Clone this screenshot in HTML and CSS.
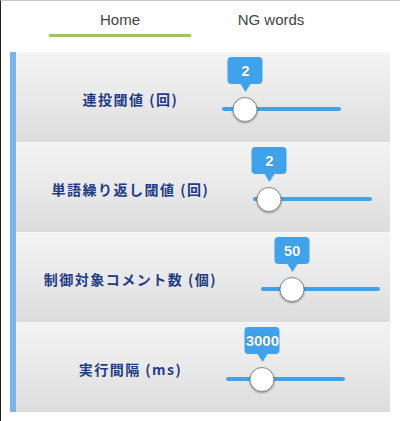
FILE: index.html
```html
<!DOCTYPE html>
<html>
<head>
<meta charset="utf-8">
<link rel="stylesheet" href="styles.css">
</head>
<body>
<div class="window">
  <nav class="tabs">
    <div class="tab active">Home</div>
    <div class="tab">NG words</div>
  </nav>
  <div class="panel">
    <div class="row">
      <div class="label">連投閾値 (回)</div>
      <div class="slider">
        <div class="track"></div>
        <div class="thumb" style="left:23px"></div>
        <div class="bubble" style="left:23px">2</div>
      </div>
    </div>
    <div class="row">
      <div class="label">単語繰り返し閾値 (回)</div>
      <div class="slider">
        <div class="track"></div>
        <div class="thumb" style="left:16px"></div>
        <div class="bubble" style="left:16px">2</div>
      </div>
    </div>
    <div class="row">
      <div class="label">制御対象コメント数 (個)</div>
      <div class="slider">
        <div class="track"></div>
        <div class="thumb" style="left:31px"></div>
        <div class="bubble" style="left:31px">50</div>
      </div>
    </div>
    <div class="row">
      <div class="label">実行間隔 (ms)</div>
      <div class="slider">
        <div class="track"></div>
        <div class="thumb" style="left:36px"></div>
        <div class="bubble" style="left:36px">3000</div>
      </div>
    </div>
  </div>
</div>
</body>
</html>
```
FILE: styles.css
```css
html, body {
  margin: 0;
  padding: 0;
  background: #ffffff;
}

.window {
  height: 420px;
  border-left: 1px solid #1c1c1c;
  border-top: 1px solid #c8c8c8;
  background: #ffffff;
  font-family: "Liberation Sans", Arial, sans-serif;
}

.tabs {
  display: flex;
  gap: 9px;
  padding-left: 48px;
}

.tab {
  width: 142px;
  box-sizing: border-box;
  padding-top: 9px;
  padding-bottom: 4px;
  line-height: 20px;
  border-bottom: 3px solid transparent;
  text-align: center;
  font-size: 15px;
  color: #444444;
}

.tab.active {
  border-bottom-color: #9cc55b;
}

.panel {
  margin-top: 15px;
  margin-left: 9px;
  width: 380px;
  box-sizing: border-box;
  border-left: 6px solid #7db2e8;
  background: #ffffff;
}

.row {
  height: 90px;
  box-sizing: border-box;
  border-top: 1px solid #f8f8f8;
  background: linear-gradient(to bottom, #f3f3f3 0%, #e9e9e9 50%, #dcdcdc 100%);
  display: flex;
  align-items: flex-start;
  justify-content: center;
  padding-left: 18px;
}

.label {
  margin-top: 36px;
  line-height: 20px;
  font-family: "Noto Sans CJK JP", "Liberation Sans", sans-serif;
  font-weight: 700;
  font-size: 14px;
  letter-spacing: 1.5px;
  color: #1f3c84;
  white-space: nowrap;
}

.slider {
  position: relative;
  width: 119px;
  margin-top: 4px;
  margin-left: 44px;
  padding-top: 50px;
  height: 20px;
}

.track {
  height: 4px;
  border-radius: 2px;
  background: #3fa2ea;
}

.thumb {
  position: absolute;
  top: 40px;
  width: 25px;
  height: 25px;
  box-sizing: border-box;
  border-radius: 50%;
  background: #ffffff;
  border: 1px solid #8a8a8a;
  box-shadow: 0 1px 2px rgba(0, 0, 0, 0.35);
  transform: translateX(-50%);
}

.bubble {
  position: absolute;
  top: 0;
  width: 35px;
  height: 27px;
  border-radius: 4px;
  background: #3fa2ea;
  color: #ffffff;
  font-family: "Liberation Sans", Arial, sans-serif;
  font-weight: 700;
  font-size: 15px;
  line-height: 27px;
  text-align: center;
  white-space: nowrap;
  text-shadow: 0 0 1px rgba(0, 0, 0, 0.35);
  transform: translateX(-50%);
}

.bubble::after {
  content: "";
  position: absolute;
  left: 50%;
  top: 27px;
  margin-left: -5px;
  border-left: 5px solid transparent;
  border-right: 5px solid transparent;
  border-top: 8px solid #3fa2ea;
}
```
